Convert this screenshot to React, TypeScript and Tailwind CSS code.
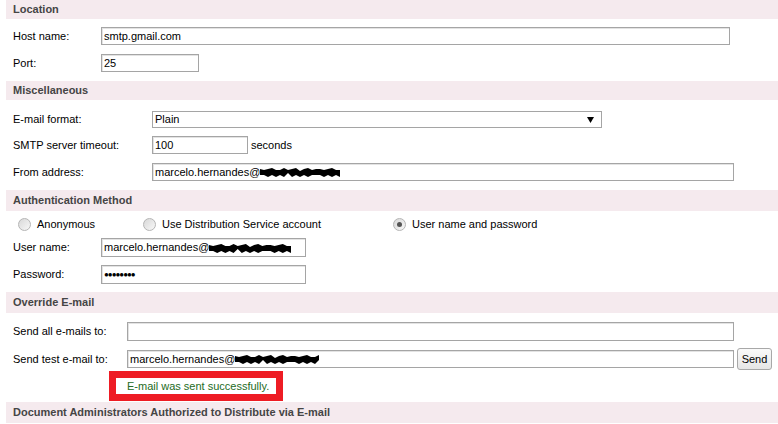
import React from 'react';

// redaction scribble drawn over the domain part of the addresses
function Scribble({ w }: { w: number }) {
  const pts: string[] = [];
  const steps = Math.floor(w / 4);
  for (let i = 0; i <= steps; i++) {
    const x = (i * w) / steps;
    pts.push(`${x.toFixed(1)},${(i % 3 === 0 ? 2 : i % 3 === 1 ? 4 : 3) + (i % 5 === 0 ? 1 : 0)}`);
  }
  for (let i = steps; i >= 0; i--) {
    const x = (i * w) / steps;
    pts.push(`${x.toFixed(1)},${(i % 2 === 0 ? 11 : 9) - (i % 7 === 0 ? 2 : 0)}`);
  }
  return (
    <svg width={w} height={12} viewBox={`0 0 ${w} 12`} className="shrink-0">
      <polygon points={pts.join(' ')} fill="#000" />
    </svg>
  );
}

function Header({ children, h = 19 }: { children: React.ReactNode; h?: number }) {
  return (
    <div
      className="ml-[6px] bg-[#f5eaee] pl-[7px] flex items-center font-bold text-[#454545]"
      style={{ height: h }}
    >
      {children}
    </div>
  );
}

function Input({ w, h = 18, children }: { w: number; h?: number; children?: React.ReactNode }) {
  return (
    <div
      className="border border-[#a5a5a5] shadow-[inset_1px_1px_0_#e3e3e3] bg-white flex items-center pl-[2px] overflow-hidden whitespace-nowrap"
      style={{ width: w, height: h }}
    >
      {children}
    </div>
  );
}

function Radio({ checked = false }: { checked?: boolean }) {
  return (
    <div className="w-[13px] h-[13px] rounded-full border border-[#b5b5b5] bg-gradient-to-br from-[#d8d8d8] to-[#f8f8f8] flex items-center justify-center shrink-0">
      {checked && <div className="w-[5px] h-[5px] rounded-full bg-[#555]" />}
    </div>
  );
}

export default function App() {
  return (
    <div className="w-[778px] h-[424px] bg-white overflow-hidden font-['Liberation_Sans',Arial,sans-serif] text-[11px] text-black leading-none">
      <Header>Location</Header>

      <div className="mt-[8px] h-[18px] flex items-center pl-[13px]">
        <div className="w-[88px]">Host name:</div>
        <Input w={629}>smtp.gmail.com</Input>
      </div>
      <div className="mt-[9px] h-[18px] flex items-center pl-[13px]">
        <div className="w-[88px]">Port:</div>
        <Input w={98}>25</Input>
      </div>

      <div className="mt-[9px]">
        <Header>Miscellaneous</Header>
      </div>

      <div className="mt-[11px] h-[17px] flex items-center pl-[13px]">
        <div className="w-[139px]">E-mail format:</div>
        <div className="w-[450px] h-[17px] border border-[#a5a5a5] bg-white flex items-center justify-between pl-[2px] pr-[7px]">
          <span>Plain</span>
          <svg width="7" height="6" viewBox="0 0 7 6">
            <polygon points="0,0 7,0 3.5,6" fill="#000" />
          </svg>
        </div>
      </div>
      <div className="mt-[8px] h-[18px] flex items-center pl-[13px]">
        <div className="w-[139px]">SMTP server timeout:</div>
        <Input w={96}>100</Input>
        <span className="ml-[3px]">seconds</span>
      </div>
      <div className="mt-[9px] h-[18px] flex items-center pl-[13px]">
        <div className="w-[139px]">From address:</div>
        <Input w={582}>
          marcelo.hernandes@
          <Scribble w={80} />
        </Input>
      </div>

      <div className="mt-[9px]">
        <Header h={21}>Authentication Method</Header>
      </div>

      <div className="mt-[5px] h-[16px] flex items-center pl-[18px]">
        <div className="w-[125px] flex items-center gap-[6px]">
          <Radio />
          <span>Anonymous</span>
        </div>
        <div className="w-[250px] flex items-center gap-[6px]">
          <Radio />
          <span>Use Distribution Service account</span>
        </div>
        <div className="flex items-center gap-[6px]">
          <Radio checked />
          <span>User name and password</span>
        </div>
      </div>
      <div className="mt-[6px] h-[19px] flex items-center pl-[13px]">
        <div className="w-[88px]">User name:</div>
        <Input w={205} h={19}>
          marcelo.hernandes@
          <Scribble w={82} />
        </Input>
      </div>
      <div className="mt-[8px] h-[19px] flex items-center pl-[13px]">
        <div className="w-[88px]">Password:</div>
        <Input w={205} h={19}>
          <span className="text-[8px] tracking-[-1px]">●●●●●●●●</span>
        </Input>
      </div>

      <div className="mt-[8px]">
        <Header h={21}>Override E-mail</Header>
      </div>

      <div className="mt-[9px] h-[19px] flex items-center pl-[13px]">
        <div className="w-[114px]">Send all e-mails to:</div>
        <Input w={607} h={19} />
      </div>
      <div className="mt-[7px] h-[22px] flex items-center pl-[13px]">
        <div className="w-[114px]">Send test e-mail to:</div>
        <Input w={607}>
          marcelo.hernandes@
          <Scribble w={84} />
        </Input>
        <button className="ml-[3px] w-[35px] h-[22px] border border-[#a8a8a8] rounded-[3px] bg-gradient-to-b from-[#fafafa] to-[#e6e6e6] text-[11px] text-black">
          Send
        </button>
      </div>

      <div className="mt-[1px] ml-[109px] w-[174px] h-[30px] border-[7px] border-[#ee1c24] bg-white flex items-center pl-[11px] text-[#246b24]">
        E-mail was sent successfully.
      </div>

      <div className="mt-[1px]">
        <Header h={21}>Document Administrators Authorized to Distribute via E-mail</Header>
      </div>
    </div>
  );
}
